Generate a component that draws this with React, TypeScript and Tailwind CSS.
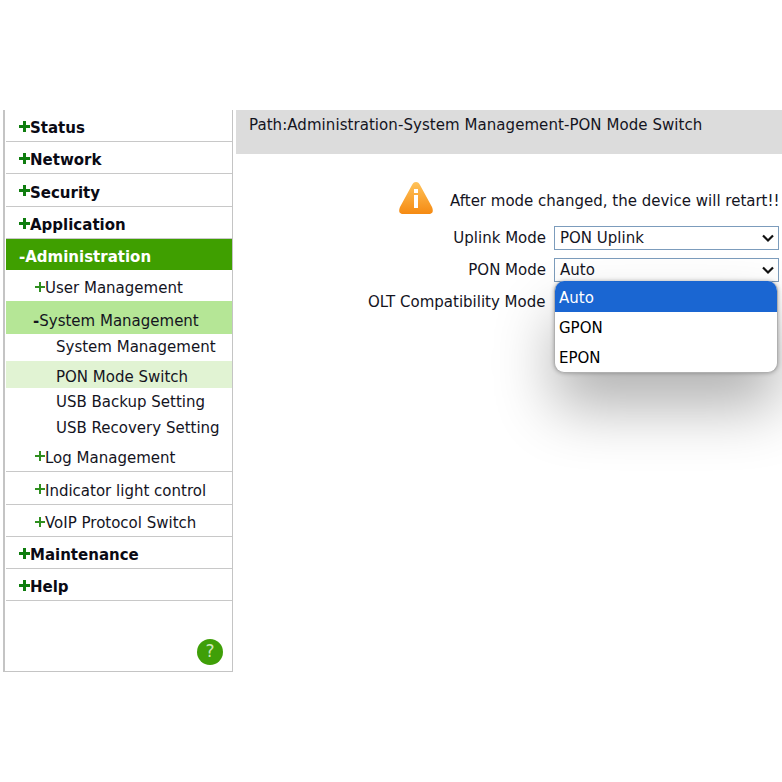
const font = "font-['DejaVu_Sans',Verdana,sans-serif]";

function Top({ label, h = "h-[32px]" }: { label: string; h?: string }) {
  return (
    <div className={`${h} flex items-center pl-[13px] pt-[6px] border-b border-[#c8c8c8] text-[15px] font-bold text-[#0a0a14]`}>
      <svg width="11" height="11" viewBox="0 0 11 11" className="shrink-0 -mt-[5px]">
        <path d="M5.5 0 V11 M0 5.5 H11" stroke="#0f7d0f" strokeWidth="3" />
      </svg>
      <span>{label}</span>
    </div>
  );
}

function Sub({ label, h = "h-[32px]", border = true, pt = "pt-[6px]" }: { label: string; h?: string; border?: boolean; pt?: string }) {
  return (
    <div className={`${h} ${pt} flex items-center pl-[29px] text-[15px] text-[#14141e] ${border ? "border-b border-[#c8c8c8]" : ""}`}>
      <svg width="10" height="10" viewBox="0 0 10 10" className="shrink-0 -mt-[4px]">
        <path d="M5 0 V10 M0 5 H10" stroke="#2f8f1f" strokeWidth="2" />
      </svg>
      <span>{label}</span>
    </div>
  );
}

function Leaf({ label, h, active, pt = "" }: { label: string; h: string; active?: boolean; pt?: string }) {
  return (
    <div className={`${h} ${pt} flex items-center pl-[50px] text-[15px] text-[#14141e] ${active ? "bg-[#e1f3d3]" : ""}`}>
      {label}
    </div>
  );
}

function Chevron() {
  return (
    <svg width="14" height="10" viewBox="0 0 14 10" fill="none" className="shrink-0">
      <path d="M2 2.5 L7 7.5 L12 2.5" stroke="#111" strokeWidth="2.2" />
    </svg>
  );
}

function FakeSelect({ value }: { value: string }) {
  return (
    <div className="w-[225px] h-[24px] border border-[#7c9cbc] bg-white flex items-center justify-between pl-[5px] pr-[3px] text-[15px] text-[#14141e]">
      <span>{value}</span>
      <Chevron />
    </div>
  );
}

function WarnIcon() {
  return (
    <svg width="38" height="38" viewBox="0 0 38 38" className="self-start -mt-[2px] shrink-0">
      <defs>
        <linearGradient id="w" x1="0" y1="0" x2="0" y2="1">
          <stop offset="0" stopColor="#ffc35a" />
          <stop offset="1" stopColor="#f58a12" />
        </linearGradient>
      </defs>
      <path d="M19 3 C17 3 16 4 15 6 L3 28 C1 33 3 35 6 35 L32 35 C35 35 37 33 35 28 L23 6 C22 4 21 3 19 3 Z" fill="url(#w)" />
      <rect x="17" y="10" width="4" height="4" fill="#fff" />
      <rect x="17" y="16" width="4" height="13" fill="#fff" />
    </svg>
  );
}

export default function App() {
  return (
    <div className={`${font} w-[782px] h-[782px] bg-white overflow-hidden pt-[110px] flex items-start`}>
      <aside className="ml-[3px] w-[230px] h-[562px] shrink-0 border-l-2 border-r border-b border-[#c4c4c4] pl-[1px] relative">
        <Top label="Status" />
        <Top label="Network" />
        <Top label="Security" h="h-[33px]" />
        <Top label="Application" />
        <div className="h-[31px] pt-[6px] flex items-center pl-[13px] bg-[#3f9f00] text-white text-[15px] font-bold">
          <span>-</span>
          <span>Administration</span>
        </div>
        <Sub label="User Management" h="h-[31px]" border={false} />
        <div className="h-[33px] pt-[8px] flex items-center pl-[27px] bg-[#b5e696] text-[15px] text-[#14141e]">
          <span className="font-bold">-</span>
          <span>System Management</span>
        </div>
        <Leaf label="System Management" h="h-[27px]" />
        <Leaf label="PON Mode Switch" h="h-[27px]" active pt="pt-[6px]" />
        <Leaf label="USB Backup Setting" h="h-[26px]" pt="pt-[2px]" />
        <Leaf label="USB Recovery Setting" h="h-[27px]" pt="pt-[2px]" />
        <Sub label="Log Management" h="h-[31px]" pt="pt-[4px]" />
        <Sub label="Indicator light control" h="h-[33px]" />
        <Sub label="VoIP Protocol Switch" />
        <Top label="Maintenance" />
        <Top label="Help" />
        <div className="absolute left-[192px] top-[529px] w-[26px] h-[26px] rounded-full bg-[#3f9f08] text-[#cfe8b8] text-[17px] flex items-center justify-center">
          ?
        </div>
      </aside>

      <main className="ml-[3px] flex-1 min-w-0">
        <div className="h-[44px] bg-[#dcdcdc] pl-[13px] pt-[4px] text-[15px] tracking-[0.06px] text-[#14141e] whitespace-nowrap">
          Path:Administration-System Management-PON Mode Switch
        </div>
        <div className="mt-[27px] flex items-center h-[40px] pl-[161px] text-[15px] text-[#14141e] whitespace-nowrap">
          <WarnIcon />
          <span className="ml-[15px]">After mode changed, the device will retart!!</span>
        </div>
        <div className="relative mt-[1px] flex flex-col text-[15px] text-[#14141e]">
          <div className="h-[32px] flex items-center justify-end pr-[3px] gap-[8px]">
            <span>Uplink Mode</span>
            <FakeSelect value="PON Uplink" />
          </div>
          <div className="h-[32px] flex items-center justify-end pr-[3px] gap-[8px]">
            <span>PON Mode</span>
            <FakeSelect value="Auto" />
          </div>
          <div className="h-[32px] flex items-center pl-[132px]">
            <span>OLT Compatibility Mode</span>
          </div>
          <div className="absolute left-[318px] top-[59px] w-[224px] h-[92px] rounded-[10px] overflow-hidden bg-white border-b border-x border-[#b0b0b0] shadow-[0_35px_60px_rgba(0,0,0,0.3),0_0_4px_rgba(0,0,0,0.3)]">
            <div className="h-[31px] pt-[4px] bg-[#1a66d2] text-white flex items-center pl-[4px]">Auto</div>
            <div className="h-[30px] pt-[2px] flex items-center pl-[4px] text-black">GPON</div>
            <div className="h-[30px] pt-[2px] flex items-center pl-[4px] text-black">EPON</div>
          </div>
        </div>
      </main>
    </div>
  );
}
